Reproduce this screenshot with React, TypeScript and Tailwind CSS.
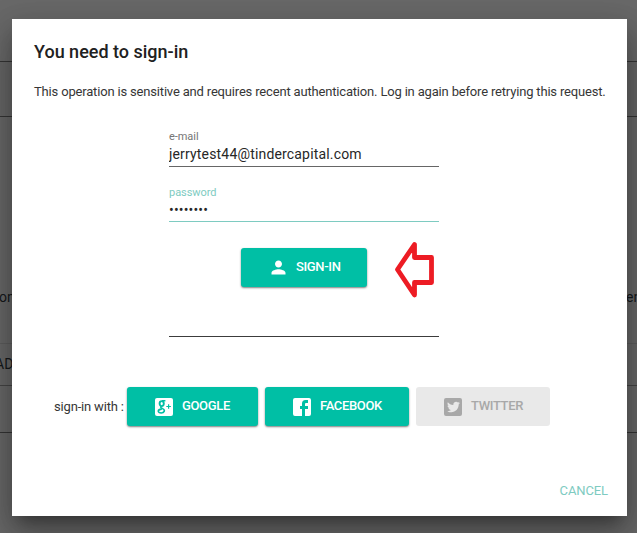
import type { ReactNode } from "react";
import { MdPerson } from "react-icons/md";

function PageBehind() {
  return (
    <div className="flex h-[533px] w-full flex-col overflow-hidden bg-[#686868] text-[14px] text-[#15181b]">
      <div className="h-[62px] border-b border-[#353535]" />
      <div className="h-[55px] border-b border-[#353535] bg-[#666666]" />
      <div className="h-[226px] pt-[171px]">
        <div className="flex justify-between leading-[18px]">
          <span className="-ml-px">on</span>
          <span className="-mr-1 w-[15px]">en</span>
        </div>
      </div>
      <div className="h-[43px] border-t border-b border-t-[#5d5d5d] border-b-[#454545] pt-[11px] leading-[18px]">
        <span className="-ml-[5px]">AD</span>
      </div>
      <div className="h-[47px] border-b border-[#353535]" />
    </div>
  );
}

function Field({ label, value, focused = false }: { label: string; value: string; focused?: boolean }) {
  return (
    <label className={`flex w-[270px] flex-col border-b ${focused ? "h-[55px] border-[#7ecbc1]" : "h-[38px] border-[#666666]"}`}>
      <span
        className={`text-[11px] leading-[14px] tracking-[-0.05px] ${
          focused ? "mt-[19px] text-[#7ecbc1]" : "mt-px text-[#757575]"
        }`}
      >
        {label}
      </span>
      <input
        className="-mt-px h-[22px] w-full bg-transparent p-0 text-[14px] tracking-[0.17px] text-[#272727] outline-none"
        type={focused ? "password" : "text"}
        defaultValue={value}
      />
    </label>
  );
}

function GoogleIcon() {
  return (
    <svg width="24" height="24" viewBox="0 0 24 24">
      <rect x="3" y="3" width="18" height="18" rx="2" fill="white" />
      <g fill="none" stroke="#00bfa5">
        <ellipse cx="9.7" cy="8.6" rx="2.1" ry="2.5" strokeWidth="1.9" />
        <path d="M10 5.8h3.4M9.2 11.3c-1.2 1.2.2 1.7 1.4 2.3 3.2 1.5 1.5 4.4-1.4 4.4-4 0-4-3.7.6-3.9" strokeWidth="1.6" />
        <path d="M14.3 11.5h4.6M16.6 9.2v4.6" strokeWidth="1.2" />
      </g>
    </svg>
  );
}

function FacebookIcon() {
  return (
    <svg width="24" height="24" viewBox="0 0 24 24" fill="currentColor">
      <path d="M5 3h14a2 2 0 0 1 2 2v14a2 2 0 0 1-2 2H5a2 2 0 0 1-2-2V5a2 2 0 0 1 2-2m13 2h-2.5A3.5 3.5 0 0 0 12 8.5V11h-2v3h2v7h3v-7h3v-3h-3V9a1 1 0 0 1 1-1h2V5z" />
    </svg>
  );
}

function TwitterIcon() {
  return (
    <svg width="24" height="24" viewBox="0 0 24 24" fill="currentColor">
      <path d="M17.71 9.33C18.19 8.93 18.75 8.45 19 7.92C18.59 8.13 18.1 8.26 17.56 8.33C18.06 7.97 18.47 7.5 18.68 6.86C18.16 7.14 17.63 7.38 16.97 7.5C15.42 5.63 11.71 7.15 12.37 9.95C9.76 9.79 8.17 8.61 6.85 7.16C6.1 8.38 6.75 10.23 7.64 10.74C7.18 10.71 6.83 10.57 6.5 10.41C6.54 11.95 7.39 12.69 8.58 13.09C8.22 13.16 7.82 13.18 7.44 13.12C7.81 14.19 8.58 14.86 9.9 15C9 15.76 7.34 16.29 6 16.08C7.15 16.81 8.46 17.39 10.28 17.31C14.69 17.11 17.64 13.95 17.71 9.33M19 3A2 2 0 0 1 21 5V19A2 2 0 0 1 19 21H5A2 2 0 0 1 3 19V5A2 2 0 0 1 5 3H19Z" />
    </svg>
  );
}

function Button({ icon, children, width, disabled = false }: { icon: ReactNode; children: string; width: string; disabled?: boolean }) {
  return (
    <button
      disabled={disabled}
      className={`flex h-[39px] items-center gap-[6px] rounded-[3px] pl-[25px] text-[13px] whitespace-nowrap ${width} ${
        disabled
          ? "bg-[#e9e9e9] text-[#a8a8a8]"
          : "bg-[#00bfa5] text-white shadow-[0_1px_2px_rgba(0,0,0,0.5)]"
      }`}
    >
      {icon}
      <span className="pb-px font-medium tracking-[-0.35px]">{children}</span>
    </button>
  );
}

export default function App() {
  return (
    <main className="relative h-[533px] w-[637px] overflow-hidden font-[Roboto,sans-serif]">
      <PageBehind />
      <div className="absolute inset-0 px-3 pt-[19px]">
        <section className="flex h-[497px] w-[615px] flex-col bg-white pt-[21px] text-[#363636] shadow-[0_11px_15px_-7px_rgba(0,0,0,0.35),0_24px_38px_3px_rgba(0,0,0,0.16),0_9px_30px_4px_rgba(0,0,0,0.16)]">
          <h1 className="ml-[22px] text-[18px] leading-6 font-medium text-[#212121]">You need to sign-in</h1>
          <p className="mt-[19px] ml-[22px] text-[13px] leading-[18px] tracking-[-0.175px] whitespace-nowrap">
            This operation is sensitive and requires recent authentication. Log in again before retrying this request.
          </p>
          <div className="mt-[28px] ml-[157px]">
            <Field label="e-mail" value="jerrytest44@tindercapital.com" />
            <Field label="password" value="12345678" focused />
          </div>
          <div className="mt-[26px] ml-[229px] flex h-[39px] items-center gap-[27px]">
            <Button icon={<MdPerson size={21} className="mx-[1.5px]" />} width="w-[126px]">SIGN-IN</Button>
            <svg width="42" height="62" viewBox="0 0 42 62" className="shrink-0">
              <path
                d="M3.5 32.5 20.5 7.5v13h17v25h-17v12.5Z"
                fill="none"
                stroke="#ed1c24"
                strokeWidth="4.8"
                strokeLinejoin="round"
              />
            </svg>
          </div>
          <div className="ml-[157px] h-[50px] w-[270px] border-b border-[#3c3c3c]" />
          <div className="mt-[50px] ml-[42px] flex items-center">
            <span className="w-[73px] text-[13px] leading-[39px] tracking-[-0.18px] whitespace-nowrap">sign-in with :</span>
            <div className="flex gap-[7px]">
              <Button icon={<GoogleIcon />} width="w-[131px]">GOOGLE</Button>
              <Button icon={<FacebookIcon />} width="w-[144px]">FACEBOOK</Button>
              <Button icon={<TwitterIcon />} width="w-[134px]" disabled>TWITTER</Button>
            </div>
          </div>
          <button className="mt-[56px] mr-[19px] self-end text-[13px] leading-[18px] tracking-[-0.1px] text-[#7ecbc1]">CANCEL</button>
        </section>
      </div>
    </main>
  );
}
